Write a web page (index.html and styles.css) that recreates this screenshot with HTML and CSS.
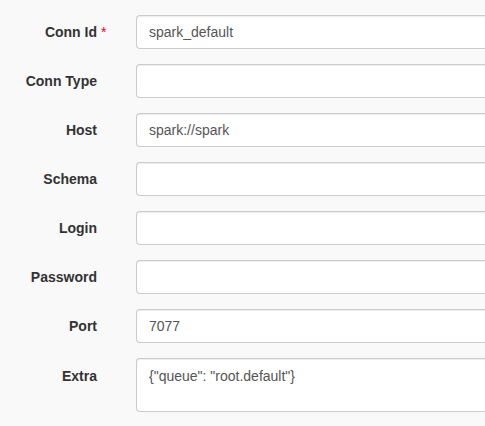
FILE: index.html
```html
<!DOCTYPE html>
<html>
<head>
<meta charset="utf-8">
<link rel="stylesheet" href="styles.css">
</head>
<body>
<form class="form">
  <div class="row">
    <label class="label">Conn Id<span class="req">*</span></label>
    <div class="field"><input class="input" type="text" value="spark_default"></div>
  </div>
  <div class="row">
    <label class="label">Conn Type</label>
    <div class="field"><input class="input" type="text" value=""></div>
  </div>
  <div class="row">
    <label class="label">Host</label>
    <div class="field"><input class="input" type="text" value="spark://spark"></div>
  </div>
  <div class="row">
    <label class="label">Schema</label>
    <div class="field"><input class="input" type="text" value=""></div>
  </div>
  <div class="row">
    <label class="label">Login</label>
    <div class="field"><input class="input" type="text" value=""></div>
  </div>
  <div class="row">
    <label class="label">Password</label>
    <div class="field"><input class="input" type="password" value=""></div>
  </div>
  <div class="row">
    <label class="label">Port</label>
    <div class="field"><input class="input" type="text" value="7077"></div>
  </div>
  <div class="row row-top">
    <label class="label">Extra</label>
    <div class="field"><textarea class="input textarea">{"queue": "root.default"}</textarea></div>
  </div>
</form>
</body>
</html>
```
FILE: styles.css
```css
html, body {
  margin: 0;
  padding: 0;
  background: #f9f9f9;
  overflow: hidden;
}
body {
  font-family: "Liberation Sans", Arial, sans-serif;
  font-size: 14px;
  color: #333;
}
.form {
  padding-top: 15px;
  display: flex;
  flex-direction: column;
  gap: 15px;
}
.row {
  display: flex;
  align-items: center;
}
.row-top {
  align-items: flex-start;
}
.row-top .label {
  padding-top: 8px;
}
.label {
  width: 97px;
  flex: none;
  text-align: right;
  font-weight: bold;
  line-height: 20px;
  white-space: nowrap;
}
.req {
  display: inline-block;
  width: 0;
  overflow: visible;
  color: #e4002b;
  font-weight: normal;
  text-indent: 4px;
}
.field {
  margin-left: 39px;
  flex: 1;
  min-width: 0;
}
.input {
  box-sizing: border-box;
  display: block;
  width: 100%;
  height: 34px;
  padding: 6px 12px;
  border: 1px solid #ccc;
  border-right: none;
  border-radius: 4px 0 0 4px;
  background: #fff;
  font-family: "Liberation Sans", Arial, sans-serif;
  font-size: 14px;
  line-height: 20px;
  color: #555;
  margin: 0;
  box-shadow: inset 0 1px 1px rgba(0,0,0,.075);
}
.textarea {
  height: 54px;
  resize: none;
  padding-top: 7px;
  overflow: hidden;
}
```
